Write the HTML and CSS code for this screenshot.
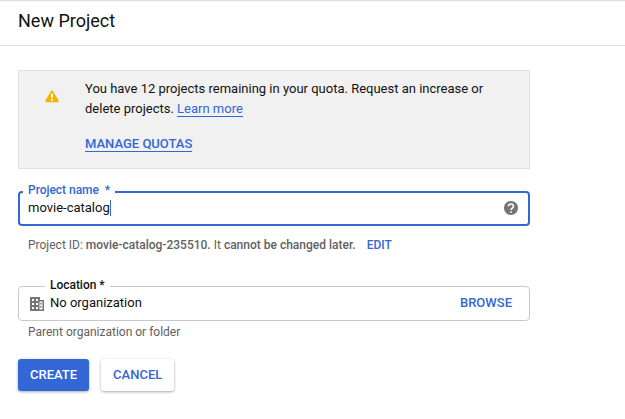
FILE: index.html
```html
<!DOCTYPE html>
<html lang="en">
<head>
<meta charset="utf-8">
<title>New Project</title>
<link rel="stylesheet" href="styles.css">
</head>
<body>
<header class="header"><h1>New Project</h1></header>
<main class="main">
  <section class="quota">
    <svg class="warn" viewBox="0 0 14 13"><path fill="#f4b400" stroke="#f4b400" stroke-width="2.600" stroke-linejoin="round" d="M7 1.800L12.300 11H1.700z"/><path fill="#fff" d="M6 3.500h2v4.200H6zM6 9h2v1.800H6z"/></svg>
    <div class="quota-body">
      <p>You have 12 projects remaining in your quota. Request an increase or<br>delete projects. <a class="link" href="#">Learn more</a></p>
      <a class="link manage" href="#">MANAGE QUOTAS</a>
    </div>
  </section>
  <div class="field name-field">
    <span class="label">Project name &nbsp;*</span>
    <span class="value">movie-catalog</span><span class="caret"></span>
    <svg class="help" viewBox="2 2 20 20"><path fill="#757575" d="M12 2C6.480 2 2 6.480 2 12s4.480 10 10 10 10-4.480 10-10S17.520 2 12 2z"/><path fill="none" stroke="#fff" stroke-width="2.300" d="M8.500 9.500c0-4.200 7-4.200 7 0 0 2.500-3.500 2.600-3.500 5.500"/><path fill="#fff" d="M10.800 16.500h2.400v2.400h-2.400z"/></svg>
  </div>
  <p class="hint id-hint">Project ID: <b>movie-catalog-235510.</b> It <b>cannot be changed later.</b><a class="edit" href="#">EDIT</a></p>
  <div class="field location-field">
    <span class="label">Location *</span>
    <svg class="org" viewBox="0 0 14 14"><path fill="#757575" fill-rule="evenodd" d="M0 0h10v3h4v11H0zM2 2v2h2V2zM6 2v2h2V2zM2 6v2h2V6zM6 6v2h2V6zM2 10v2h2v-2zM6 10v2h2v-2zM9.500 4.500v8h3v-8zM10.200 6h1.500v1.500h-1.500zM10.200 9h1.500v1.500h-1.500z"/></svg>
    <span class="value">No organization</span>
    <a class="browse" href="#">BROWSE</a>
  </div>
  <p class="hint">Parent organization or folder</p>
  <div class="actions"><button class="btn primary">CREATE</button><button class="btn">CANCEL</button></div>
</main>
</body>
</html>
```
FILE: styles.css
```css
* { box-sizing: border-box; }
body { margin: 0; min-height: 419px; background: #fff; color: #111; font: 13px/20px Roboto, sans-serif; }
h1, p { margin: 0; }
a { color: #3367d6; text-decoration: none; }
.header { height: 46px; padding: 8px 18px; border-top: 1px solid #e0e0e0; border-bottom: 1px solid #e0e0e0; box-shadow: inset 0 1px #f4f4f4; }
h1 { font-size: 18px; line-height: 24px; font-weight: 400; }
.main { width: 530px; padding: 24px 0 0 18px; }
.quota { display: flex; height: 99px; padding: 8px 0 0 26px; background: #f1f1f1; border: 1px solid #e0e0e0; }
.warn { width: 14px; height: 13px; margin-top: 11px; }
.quota-body { margin-left: 26px; }
.link { display: inline-block; line-height: 15px; border-bottom: 1px solid #3367d6; }
.manage { margin-top: 17px; font-weight: 500; }
.field { position: relative; display: flex; align-items: center; height: 35px; border-radius: 4px; }
.name-field { margin-top: 22px; padding: 0 10px 2px 8px; border: 2px solid #3367d6; }
.label { position: absolute; top: -11px; left: 3px; padding: 0 5px; background: #fff; color: #3367d6; font-size: 12px; line-height: 16px; letter-spacing: -.03px; font-weight: 500; }
.caret { width: 1px; height: 16px; background: #3367d6; }
.help { width: 14px; height: 14px; margin-left: auto; }
.hint { margin-top: 3px; padding-left: 10px; color: #616161; font-size: 12px; line-height: 16px; }
.id-hint { margin-top: 11px; }
b { font-weight: 500; }
.edit { margin-left: 11px; font-weight: 500; }
.location-field { margin-top: 33px; padding: 0 17px 2px 11px; border: 1px solid #c8c8c8; }
.location-field .label { top: -10px; left: 26px; color: #111; }
.org { width: 14px; height: 14px; margin: 2px 6px 0 0; }
.browse { margin-left: auto; font-weight: 500; }
.actions { display: flex; gap: 12px; margin-top: 19px; }
.btn { height: 32px; padding: 0 12px; border: 0; border-radius: 3px; background: #fff; color: #3367d6; font: 500 13px/32px Roboto, sans-serif; box-shadow: 0 1px 3px rgba(0,0,0,.35); }
.primary { background: #3367d6; color: #fff; }
```
